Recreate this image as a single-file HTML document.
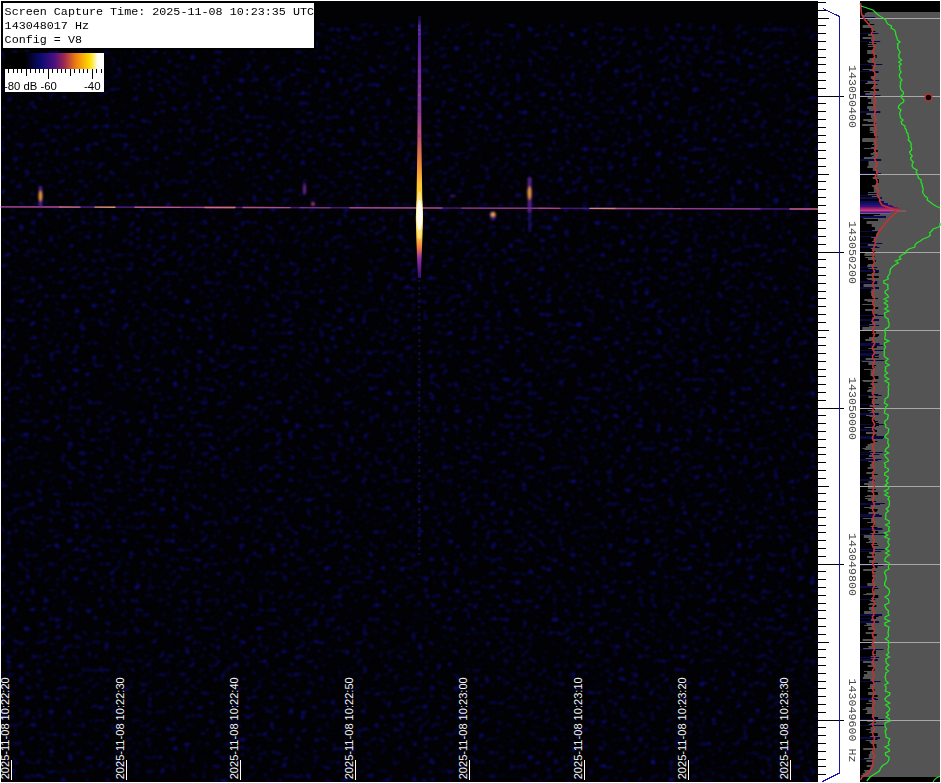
<!DOCTYPE html>
<html><head><meta charset="utf-8"><style>
html,body{margin:0;padding:0;background:#fff;width:941px;height:783px;overflow:hidden}
body{position:relative}
</style></head><body>
<svg width="941" height="783" viewBox="0 0 941 783" style="position:absolute;left:0;top:0" shape-rendering="auto">
<defs>
<filter id="nz" x="1" y="23" width="817" height="759" filterUnits="userSpaceOnUse" color-interpolation-filters="sRGB">
<feTurbulence type="fractalNoise" baseFrequency="0.163 0.217" numOctaves="2" seed="5" result="t"/>
<feColorMatrix in="t" type="matrix" values="0 0 0 0 0.06  0 0 0 0 0.06  0 0 0 0 0.7  1 0 0 0 0" result="c"/>
<feComponentTransfer in="c" result="d"><feFuncA type="linear" slope="3.0" intercept="-1.78"/></feComponentTransfer>
<feGaussianBlur in="d" stdDeviation="0.8"/>
</filter>
<linearGradient id="cb" x1="0" x2="1" y1="0" y2="0">
<stop offset="0" stop-color="#000"/><stop offset="0.2" stop-color="#000"/>
<stop offset="0.36" stop-color="#0a0a70"/><stop offset="0.5" stop-color="#4a1080"/>
<stop offset="0.6" stop-color="#a02850"/><stop offset="0.72" stop-color="#f08010"/>
<stop offset="0.86" stop-color="#ffe000"/><stop offset="0.94" stop-color="#ffffff"/><stop offset="1" stop-color="#fff"/>
</linearGradient>
<linearGradient id="stk" x1="0" x2="0" y1="16" y2="278" gradientUnits="userSpaceOnUse">
<stop offset="0" stop-color="#100830"/>
<stop offset="0.04" stop-color="#3a1a90"/>
<stop offset="0.17" stop-color="#6a2a9a"/>
<stop offset="0.36" stop-color="#8a3a90"/>
<stop offset="0.47" stop-color="#c05070"/>
<stop offset="0.57" stop-color="#f08a30"/>
<stop offset="0.645" stop-color="#ffc830"/>
<stop offset="0.84" stop-color="#ffd040"/>
<stop offset="0.885" stop-color="#f07a40"/>
<stop offset="0.924" stop-color="#9030a0"/>
<stop offset="1" stop-color="#301070"/>
</linearGradient>
<linearGradient id="hl" x1="0" x2="818" y1="0" y2="0" gradientUnits="userSpaceOnUse">
<stop offset="0" stop-color="#c04890"/>
<stop offset="0.07" stop-color="#e07080"/>
<stop offset="0.095" stop-color="#7030a0"/>
<stop offset="0.115" stop-color="#f0a060"/>
<stop offset="0.14" stop-color="#c04890"/>
<stop offset="0.54" stop-color="#b04090"/>
<stop offset="0.55" stop-color="#402090"/>
<stop offset="0.56" stop-color="#b04090"/>
<stop offset="0.73" stop-color="#e07070"/>
<stop offset="0.75" stop-color="#c04890"/>
<stop offset="0.91" stop-color="#b04090"/>
<stop offset="0.93" stop-color="#502090"/>
<stop offset="0.95" stop-color="#c05090"/>
<stop offset="1" stop-color="#c05090"/>
</linearGradient>
<filter id="b06" x="-50%" y="-50%" width="200%" height="200%"><feGaussianBlur stdDeviation="0.6"/></filter>
<filter id="b1" x="-50%" y="-50%" width="200%" height="200%"><feGaussianBlur stdDeviation="1"/></filter>
</defs>
<rect x="0" y="0" width="941" height="783" fill="#fff"/>
<rect x="1" y="1" width="817" height="781" fill="#020205"/>
<rect x="1" y="23" width="817" height="759" filter="url(#nz)" fill="#000"/>
<line x1="419.3" y1="274" x2="419.3" y2="560" stroke="#3a28b0" stroke-width="2" opacity="0.3" stroke-dasharray="3 3 2 5"/>
<g filter="url(#b06)">
<path d="M1 206.9 L818 209.0" stroke="#5a2090" stroke-width="1.6" fill="none" opacity="0.75"/>
<path d="M1 206.90 L60 207.05" stroke="#c85888" stroke-width="1.4" fill="none" opacity="0.72" stroke-linecap="round"/>
<path d="M60 207.05 L80 207.11" stroke="#e88878" stroke-width="1.4" fill="none" opacity="0.80" stroke-linecap="round"/>
<path d="M95 207.14 L115 207.20" stroke="#f8b060" stroke-width="1.4" fill="none" opacity="0.80" stroke-linecap="round"/>
<path d="M135 207.25 L180 207.36" stroke="#d87080" stroke-width="1.4" fill="none" opacity="0.76" stroke-linecap="round"/>
<path d="M180 207.36 L235 207.50" stroke="#c85888" stroke-width="1.4" fill="none" opacity="0.72" stroke-linecap="round"/>
<path d="M205 207.43 L235 207.50" stroke="#e08078" stroke-width="1.4" fill="none" opacity="0.72" stroke-linecap="round"/>
<path d="M243 207.52 L290 207.64" stroke="#d06888" stroke-width="1.4" fill="none" opacity="0.72" stroke-linecap="round"/>
<path d="M300 207.67 L330 207.75" stroke="#a04890" stroke-width="1.4" fill="none" opacity="0.56" stroke-linecap="round"/>
<path d="M350 207.80 L442 208.03" stroke="#c85888" stroke-width="1.4" fill="none" opacity="0.72" stroke-linecap="round"/>
<path d="M462 208.09 L540 208.29" stroke="#b04890" stroke-width="1.4" fill="none" opacity="0.64" stroke-linecap="round"/>
<path d="M540 208.29 L560 208.34" stroke="#c85888" stroke-width="1.4" fill="none" opacity="0.72" stroke-linecap="round"/>
<path d="M590 208.41 L615 208.48" stroke="#f8a070" stroke-width="1.4" fill="none" opacity="0.80" stroke-linecap="round"/>
<path d="M615 208.48 L680 208.65" stroke="#d06888" stroke-width="1.4" fill="none" opacity="0.72" stroke-linecap="round"/>
<path d="M680 208.65 L760 208.85" stroke="#b85090" stroke-width="1.4" fill="none" opacity="0.64" stroke-linecap="round"/>
<path d="M790 208.93 L818 209.00" stroke="#e07080" stroke-width="1.4" fill="none" opacity="0.80" stroke-linecap="round"/>
</g>
<g filter="url(#b1)">
<rect x="38.8" y="186" width="3.4" height="22" rx="1.7" fill="#6a2aa0" opacity="0.8"/>
<ellipse cx="40.5" cy="196" rx="1.8" ry="5" fill="#f0a040"/>
<rect x="527.8" y="177" width="3.6" height="36" rx="1.8" fill="#6a2aa0" opacity="0.85"/>
<ellipse cx="529.5" cy="193" rx="2" ry="6.5" fill="#f09a40"/>
<rect x="528.3" y="212" width="2.6" height="20" fill="#3020a0" opacity="0.5"/>
<ellipse cx="493" cy="216" rx="3" ry="5" fill="#4a20a0" opacity="0.7"/>
<ellipse cx="493" cy="214.5" rx="2.6" ry="2.2" fill="#f8a840"/>
<ellipse cx="304.5" cy="189" rx="1.6" ry="6" fill="#8030a0" opacity="0.8"/>
<ellipse cx="313" cy="204" rx="2" ry="2.2" fill="#a04080" opacity="0.9"/>
<ellipse cx="453" cy="196" rx="3" ry="1" fill="#7030a0" opacity="0.6"/>
</g>
<g filter="url(#b06)">
<path d="M418.1 16 L420.9 16 L421.4 140 L422.3 200 L423 218 L422.3 240 L421.4 262 L421 278 L418 278 L417.2 262 L416.4 240 L415.8 218 L416.5 200 L417.4 140 Z" fill="url(#stk)"/>
<rect x="418.0" y="70.1" width="2.2" height="1.5" fill="#c050a0" opacity="0.40"/>
<rect x="418.0" y="110.6" width="2.2" height="2" fill="#5030b0" opacity="0.57"/>
<rect x="418.6" y="85.4" width="2.2" height="2" fill="#c050a0" opacity="0.47"/>
<rect x="418.0" y="93.9" width="2.2" height="2" fill="#b04090" opacity="0.64"/>
<rect x="418.2" y="48.2" width="2.2" height="1.5" fill="#5030b0" opacity="0.44"/>
<rect x="418.2" y="131.9" width="2.2" height="1.5" fill="#b04090" opacity="0.43"/>
<rect x="418.2" y="28.9" width="2.2" height="2" fill="#c050a0" opacity="0.45"/>
<rect x="417.9" y="130.4" width="2.2" height="3" fill="#c050a0" opacity="0.54"/>
<rect x="418.1" y="135.3" width="2.2" height="1.5" fill="#5030b0" opacity="0.36"/>
<rect x="418.3" y="114.3" width="2.2" height="1.5" fill="#5030b0" opacity="0.56"/>
<rect x="417.8" y="28.2" width="2.2" height="2" fill="#5030b0" opacity="0.63"/>
<rect x="418.1" y="33.3" width="2.2" height="1.5" fill="#c050a0" opacity="0.42"/>
<rect x="418.1" y="24.6" width="2.2" height="3" fill="#b04090" opacity="0.38"/>
<rect x="417.8" y="113.7" width="2.2" height="1.5" fill="#b04090" opacity="0.40"/>
<rect x="418.4" y="70.1" width="2.2" height="2" fill="#5030b0" opacity="0.49"/>
<rect x="418.4" y="30.4" width="2.2" height="3" fill="#5030b0" opacity="0.61"/>
<ellipse cx="419.5" cy="215" rx="3.4" ry="24" fill="#ffe890" opacity="0.8"/>
<ellipse cx="419.5" cy="215" rx="3.0" ry="15" fill="#fffdf0"/>
</g>
<rect x="11" y="760" width="1" height="20" fill="#fff"/>
<text transform="translate(8.5,779.3) rotate(-90)" font-family="Liberation Sans, sans-serif" font-size="11.08" fill="#f4f4f4">2025-11-08 10:22:20</text>
<rect x="126" y="760" width="1" height="20" fill="#fff"/>
<text transform="translate(123.5,779.3) rotate(-90)" font-family="Liberation Sans, sans-serif" font-size="11.08" fill="#f4f4f4">2025-11-08 10:22:30</text>
<rect x="240" y="760" width="1" height="20" fill="#fff"/>
<text transform="translate(237.5,779.3) rotate(-90)" font-family="Liberation Sans, sans-serif" font-size="11.08" fill="#f4f4f4">2025-11-08 10:22:40</text>
<rect x="355" y="760" width="1" height="20" fill="#fff"/>
<text transform="translate(352.5,779.3) rotate(-90)" font-family="Liberation Sans, sans-serif" font-size="11.08" fill="#f4f4f4">2025-11-08 10:22:50</text>
<rect x="469" y="760" width="1" height="20" fill="#fff"/>
<text transform="translate(466.5,779.3) rotate(-90)" font-family="Liberation Sans, sans-serif" font-size="11.08" fill="#f4f4f4">2025-11-08 10:23:00</text>
<rect x="584" y="760" width="1" height="20" fill="#fff"/>
<text transform="translate(581.5,779.3) rotate(-90)" font-family="Liberation Sans, sans-serif" font-size="11.08" fill="#f4f4f4">2025-11-08 10:23:10</text>
<rect x="688" y="760" width="1" height="20" fill="#fff"/>
<text transform="translate(685.5,779.3) rotate(-90)" font-family="Liberation Sans, sans-serif" font-size="11.08" fill="#f4f4f4">2025-11-08 10:23:20</text>
<rect x="790" y="760" width="1" height="20" fill="#fff"/>
<text transform="translate(787.5,779.3) rotate(-90)" font-family="Liberation Sans, sans-serif" font-size="11.08" fill="#f4f4f4">2025-11-08 10:23:30</text>
<rect x="1" y="1" width="315" height="49" fill="#000"/>
<rect x="3" y="3" width="311" height="45" fill="#fff"/>
<text x="4.6" y="15.2" font-family="Liberation Mono, monospace" font-size="11.72" fill="#000">Screen&#160;Capture&#160;Time:&#160;2025-11-08&#160;10:23:35&#160;UTC</text>
<text x="4.6" y="29.2" font-family="Liberation Mono, monospace" font-size="11.72" fill="#000">143048017&#160;Hz</text>
<text x="4.6" y="43.2" font-family="Liberation Mono, monospace" font-size="11.72" fill="#000">Config&#160;=&#160;V8</text>
<rect x="5" y="53" width="99" height="16" fill="url(#cb)"/>
<rect x="5" y="69" width="99" height="23" fill="#fff"/>
<rect x="8" y="69" width="1" height="4" fill="#000"/>
<rect x="13" y="69" width="1" height="4" fill="#000"/>
<rect x="17" y="69" width="1" height="4" fill="#000"/>
<rect x="21" y="69" width="1" height="4" fill="#000"/>
<rect x="26" y="69" width="1" height="7" fill="#000"/>
<rect x="30" y="69" width="1" height="4" fill="#000"/>
<rect x="35" y="69" width="1" height="4" fill="#000"/>
<rect x="39" y="69" width="1" height="4" fill="#000"/>
<rect x="43" y="69" width="1" height="4" fill="#000"/>
<rect x="48" y="69" width="1" height="10" fill="#000"/>
<rect x="52" y="69" width="1" height="4" fill="#000"/>
<rect x="57" y="69" width="1" height="4" fill="#000"/>
<rect x="61" y="69" width="1" height="4" fill="#000"/>
<rect x="65" y="69" width="1" height="4" fill="#000"/>
<rect x="70" y="69" width="1" height="7" fill="#000"/>
<rect x="74" y="69" width="1" height="4" fill="#000"/>
<rect x="79" y="69" width="1" height="4" fill="#000"/>
<rect x="83" y="69" width="1" height="4" fill="#000"/>
<rect x="87" y="69" width="1" height="4" fill="#000"/>
<rect x="92" y="69" width="1" height="10" fill="#000"/>
<rect x="96" y="69" width="1" height="4" fill="#000"/>
<rect x="101" y="69" width="1" height="4" fill="#000"/>
<rect x="105" y="69" width="1" height="4" fill="#000"/>
<text x="4" y="90" font-family="Liberation Sans, sans-serif" font-size="11.3" fill="#000">-80 dB -60</text>
<text x="84" y="90" font-family="Liberation Sans, sans-serif" font-size="11.5" fill="#000">-40</text>
<rect x="818" y="1" width="42" height="781" fill="#fff"/>
<rect x="818" y="2" width="8" height="1" fill="#000"/>
<rect x="818" y="10" width="8" height="1" fill="#000"/>
<rect x="818" y="18" width="11" height="1" fill="#000"/>
<rect x="818" y="25" width="8" height="1" fill="#000"/>
<rect x="818" y="33" width="8" height="1" fill="#000"/>
<rect x="818" y="41" width="8" height="1" fill="#000"/>
<rect x="818" y="49" width="8" height="1" fill="#000"/>
<rect x="818" y="57" width="8" height="1" fill="#000"/>
<rect x="818" y="64" width="8" height="1" fill="#000"/>
<rect x="818" y="72" width="8" height="1" fill="#000"/>
<rect x="818" y="80" width="8" height="1" fill="#000"/>
<rect x="818" y="88" width="8" height="1" fill="#000"/>
<rect x="818" y="96" width="26" height="1" fill="#000"/>
<rect x="818" y="103" width="8" height="1" fill="#000"/>
<rect x="818" y="111" width="8" height="1" fill="#000"/>
<rect x="818" y="119" width="8" height="1" fill="#000"/>
<rect x="818" y="127" width="8" height="1" fill="#000"/>
<rect x="818" y="135" width="8" height="1" fill="#000"/>
<rect x="818" y="142" width="8" height="1" fill="#000"/>
<rect x="818" y="150" width="8" height="1" fill="#000"/>
<rect x="818" y="158" width="8" height="1" fill="#000"/>
<rect x="818" y="166" width="8" height="1" fill="#000"/>
<rect x="818" y="174" width="11" height="1" fill="#000"/>
<rect x="818" y="181" width="8" height="1" fill="#000"/>
<rect x="818" y="189" width="8" height="1" fill="#000"/>
<rect x="818" y="197" width="8" height="1" fill="#000"/>
<rect x="818" y="205" width="8" height="1" fill="#000"/>
<rect x="818" y="213" width="8" height="1" fill="#000"/>
<rect x="818" y="220" width="8" height="1" fill="#000"/>
<rect x="818" y="228" width="8" height="1" fill="#000"/>
<rect x="818" y="236" width="8" height="1" fill="#000"/>
<rect x="818" y="244" width="8" height="1" fill="#000"/>
<rect x="818" y="252" width="26" height="1" fill="#000"/>
<rect x="818" y="259" width="8" height="1" fill="#000"/>
<rect x="818" y="267" width="8" height="1" fill="#000"/>
<rect x="818" y="275" width="8" height="1" fill="#000"/>
<rect x="818" y="283" width="8" height="1" fill="#000"/>
<rect x="818" y="291" width="8" height="1" fill="#000"/>
<rect x="818" y="298" width="8" height="1" fill="#000"/>
<rect x="818" y="306" width="8" height="1" fill="#000"/>
<rect x="818" y="314" width="8" height="1" fill="#000"/>
<rect x="818" y="322" width="8" height="1" fill="#000"/>
<rect x="818" y="330" width="11" height="1" fill="#000"/>
<rect x="818" y="337" width="8" height="1" fill="#000"/>
<rect x="818" y="345" width="8" height="1" fill="#000"/>
<rect x="818" y="353" width="8" height="1" fill="#000"/>
<rect x="818" y="361" width="8" height="1" fill="#000"/>
<rect x="818" y="369" width="8" height="1" fill="#000"/>
<rect x="818" y="376" width="8" height="1" fill="#000"/>
<rect x="818" y="384" width="8" height="1" fill="#000"/>
<rect x="818" y="392" width="8" height="1" fill="#000"/>
<rect x="818" y="400" width="8" height="1" fill="#000"/>
<rect x="818" y="408" width="26" height="1" fill="#000"/>
<rect x="818" y="415" width="8" height="1" fill="#000"/>
<rect x="818" y="423" width="8" height="1" fill="#000"/>
<rect x="818" y="431" width="8" height="1" fill="#000"/>
<rect x="818" y="439" width="8" height="1" fill="#000"/>
<rect x="818" y="447" width="8" height="1" fill="#000"/>
<rect x="818" y="454" width="8" height="1" fill="#000"/>
<rect x="818" y="462" width="8" height="1" fill="#000"/>
<rect x="818" y="470" width="8" height="1" fill="#000"/>
<rect x="818" y="478" width="8" height="1" fill="#000"/>
<rect x="818" y="486" width="11" height="1" fill="#000"/>
<rect x="818" y="493" width="8" height="1" fill="#000"/>
<rect x="818" y="501" width="8" height="1" fill="#000"/>
<rect x="818" y="509" width="8" height="1" fill="#000"/>
<rect x="818" y="517" width="8" height="1" fill="#000"/>
<rect x="818" y="525" width="8" height="1" fill="#000"/>
<rect x="818" y="532" width="8" height="1" fill="#000"/>
<rect x="818" y="540" width="8" height="1" fill="#000"/>
<rect x="818" y="548" width="8" height="1" fill="#000"/>
<rect x="818" y="556" width="8" height="1" fill="#000"/>
<rect x="818" y="564" width="26" height="1" fill="#000"/>
<rect x="818" y="571" width="8" height="1" fill="#000"/>
<rect x="818" y="579" width="8" height="1" fill="#000"/>
<rect x="818" y="587" width="8" height="1" fill="#000"/>
<rect x="818" y="595" width="8" height="1" fill="#000"/>
<rect x="818" y="603" width="8" height="1" fill="#000"/>
<rect x="818" y="610" width="8" height="1" fill="#000"/>
<rect x="818" y="618" width="8" height="1" fill="#000"/>
<rect x="818" y="626" width="8" height="1" fill="#000"/>
<rect x="818" y="634" width="8" height="1" fill="#000"/>
<rect x="818" y="642" width="11" height="1" fill="#000"/>
<rect x="818" y="649" width="8" height="1" fill="#000"/>
<rect x="818" y="657" width="8" height="1" fill="#000"/>
<rect x="818" y="665" width="8" height="1" fill="#000"/>
<rect x="818" y="673" width="8" height="1" fill="#000"/>
<rect x="818" y="681" width="8" height="1" fill="#000"/>
<rect x="818" y="688" width="8" height="1" fill="#000"/>
<rect x="818" y="696" width="8" height="1" fill="#000"/>
<rect x="818" y="704" width="8" height="1" fill="#000"/>
<rect x="818" y="712" width="8" height="1" fill="#000"/>
<rect x="818" y="720" width="26" height="1" fill="#000"/>
<rect x="818" y="727" width="8" height="1" fill="#000"/>
<rect x="818" y="735" width="8" height="1" fill="#000"/>
<rect x="818" y="743" width="8" height="1" fill="#000"/>
<rect x="818" y="751" width="8" height="1" fill="#000"/>
<rect x="818" y="759" width="8" height="1" fill="#000"/>
<rect x="818" y="766" width="8" height="1" fill="#000"/>
<rect x="818" y="774" width="8" height="1" fill="#000"/>
<polyline points="823,8.5 839.5,16.5 839.5,773 822.5,781.5" fill="none" stroke="#1818a8" stroke-width="1" shape-rendering="crispEdges"/>
<text transform="translate(848.6,96.5) rotate(90)" text-anchor="middle" font-family="Liberation Mono, monospace" font-size="11.67" fill="#484848">143050400</text>
<text transform="translate(848.6,252.5) rotate(90)" text-anchor="middle" font-family="Liberation Mono, monospace" font-size="11.67" fill="#484848">143050200</text>
<text transform="translate(848.6,408.5) rotate(90)" text-anchor="middle" font-family="Liberation Mono, monospace" font-size="11.67" fill="#484848">143050000</text>
<text transform="translate(848.6,564.5) rotate(90)" text-anchor="middle" font-family="Liberation Mono, monospace" font-size="11.67" fill="#484848">143049800</text>
<text transform="translate(848.6,720.5) rotate(90)" text-anchor="middle" font-family="Liberation Mono, monospace" font-size="11.67" fill="#484848">143049600&#160;Hz</text>
<rect x="860" y="1" width="80" height="781" fill="#545454"/>
<rect x="860" y="12" width="6.7" height="1" fill="#000"/>
<rect x="860" y="13" width="4.8" height="2" fill="#000"/>
<rect x="860" y="15" width="1.7" height="1" fill="#000"/>
<rect x="860" y="16" width="3.1" height="2" fill="#000"/>
<rect x="860" y="18" width="4.6" height="1" fill="#000"/>
<rect x="860" y="19" width="7.3" height="2" fill="#000"/>
<rect x="860" y="21" width="9.3" height="3" fill="#000"/>
<rect x="860" y="24" width="14.2" height="1" fill="#000"/>
<rect x="860" y="25" width="2.7" height="3" fill="#000"/>
<rect x="860" y="28" width="11.7" height="3" fill="#000"/>
<rect x="860" y="31" width="15.4" height="1" fill="#000"/>
<rect x="860" y="32" width="12.7" height="1" fill="#000"/>
<rect x="860" y="33" width="11.1" height="1" fill="#000"/>
<rect x="860" y="34" width="8.1" height="2" fill="#000"/>
<rect x="860" y="36" width="11.7" height="1" fill="#000"/>
<rect x="860" y="37" width="2.6" height="2" fill="#000"/>
<rect x="860" y="39" width="11.0" height="1" fill="#000"/>
<rect x="860" y="40" width="11.1" height="2" fill="#000"/>
<rect x="860" y="42" width="9.0" height="1" fill="#000"/>
<rect x="860" y="43" width="16.3" height="1" fill="#000"/>
<rect x="860" y="44" width="7.7" height="1" fill="#000"/>
<rect x="860" y="45" width="12.8" height="1" fill="#000"/>
<rect x="860" y="46" width="8.0" height="1" fill="#000"/>
<rect x="860" y="47" width="13.6" height="3" fill="#000"/>
<rect x="860" y="50" width="7.2" height="1" fill="#000"/>
<rect x="860" y="51" width="7.2" height="3" fill="#000"/>
<rect x="860" y="54" width="13.8" height="1" fill="#000"/>
<rect x="860" y="55" width="16.7" height="3" fill="#000"/>
<rect x="860" y="58" width="9.4" height="2" fill="#000"/>
<rect x="860" y="60" width="7.3" height="2" fill="#000"/>
<rect x="860" y="62" width="8.4" height="1" fill="#000"/>
<rect x="860" y="63" width="15.1" height="2" fill="#000"/>
<rect x="860" y="65" width="11.5" height="1" fill="#000"/>
<rect x="860" y="66" width="12.7" height="3" fill="#000"/>
<rect x="860" y="69" width="2.8" height="1" fill="#000"/>
<rect x="860" y="70" width="9.4" height="1" fill="#000"/>
<rect x="860" y="71" width="18.5" height="2" fill="#000"/>
<rect x="860" y="73" width="14.3" height="3" fill="#000"/>
<rect x="860" y="76" width="10.8" height="3" fill="#000"/>
<rect x="860" y="79" width="12.4" height="2" fill="#000"/>
<rect x="860" y="81" width="7.4" height="2" fill="#000"/>
<rect x="860" y="83" width="5.2" height="1" fill="#000"/>
<rect x="860" y="84" width="17.6" height="1" fill="#000"/>
<rect x="860" y="85" width="13.7" height="2" fill="#000"/>
<rect x="860" y="87" width="11.8" height="1" fill="#000"/>
<rect x="860" y="88" width="10.9" height="1" fill="#000"/>
<rect x="860" y="89" width="18.9" height="2" fill="#000"/>
<rect x="860" y="91" width="3.9" height="1" fill="#000"/>
<rect x="860" y="92" width="9.8" height="1" fill="#000"/>
<rect x="860" y="93" width="5.3" height="3" fill="#000"/>
<rect x="860" y="96" width="7.6" height="3" fill="#000"/>
<rect x="860" y="99" width="11.2" height="3" fill="#000"/>
<rect x="860" y="102" width="8.2" height="2" fill="#000"/>
<rect x="860" y="104" width="13.3" height="2" fill="#000"/>
<rect x="860" y="106" width="7.4" height="1" fill="#000"/>
<rect x="860" y="107" width="7.1" height="2" fill="#000"/>
<rect x="860" y="109" width="9.0" height="2" fill="#000"/>
<rect x="860" y="111" width="12.6" height="1" fill="#000"/>
<rect x="860" y="112" width="15.7" height="1" fill="#000"/>
<rect x="860" y="113" width="6.4" height="2" fill="#000"/>
<rect x="860" y="115" width="10.9" height="3" fill="#000"/>
<rect x="860" y="118" width="11.8" height="1" fill="#000"/>
<rect x="860" y="119" width="3.3" height="2" fill="#000"/>
<rect x="860" y="121" width="7.8" height="1" fill="#000"/>
<rect x="860" y="122" width="15.4" height="2" fill="#000"/>
<rect x="860" y="124" width="2.2" height="2" fill="#000"/>
<rect x="860" y="126" width="13.9" height="1" fill="#000"/>
<rect x="860" y="127" width="9.8" height="3" fill="#000"/>
<rect x="860" y="130" width="9.5" height="1" fill="#000"/>
<rect x="860" y="131" width="12.5" height="1" fill="#000"/>
<rect x="860" y="132" width="9.8" height="1" fill="#000"/>
<rect x="860" y="133" width="13.9" height="3" fill="#000"/>
<rect x="860" y="136" width="17.3" height="2" fill="#000"/>
<rect x="860" y="138" width="2.6" height="1" fill="#000"/>
<rect x="860" y="139" width="2.1" height="3" fill="#000"/>
<rect x="860" y="142" width="13.5" height="2" fill="#000"/>
<rect x="860" y="144" width="12.0" height="1" fill="#000"/>
<rect x="860" y="145" width="14.2" height="2" fill="#000"/>
<rect x="860" y="147" width="11.1" height="1" fill="#000"/>
<rect x="860" y="148" width="3.8" height="1" fill="#000"/>
<rect x="860" y="149" width="15.0" height="1" fill="#000"/>
<rect x="860" y="150" width="17.8" height="2" fill="#000"/>
<rect x="860" y="152" width="13.0" height="1" fill="#000"/>
<rect x="860" y="153" width="10.7" height="2" fill="#000"/>
<rect x="860" y="155" width="13.5" height="1" fill="#000"/>
<rect x="860" y="156" width="11.6" height="1" fill="#000"/>
<rect x="860" y="157" width="3.9" height="3" fill="#000"/>
<rect x="860" y="160" width="14.2" height="1" fill="#000"/>
<rect x="860" y="161" width="8.5" height="2" fill="#000"/>
<rect x="860" y="163" width="8.5" height="3" fill="#000"/>
<rect x="860" y="166" width="7.3" height="2" fill="#000"/>
<rect x="860" y="168" width="12.8" height="3" fill="#000"/>
<rect x="860" y="171" width="15.8" height="2" fill="#000"/>
<rect x="860" y="173" width="3.5" height="1" fill="#000"/>
<rect x="860" y="174" width="9.6" height="1" fill="#000"/>
<rect x="860" y="175" width="16.7" height="2" fill="#000"/>
<rect x="860" y="177" width="12.7" height="2" fill="#000"/>
<rect x="860" y="179" width="18.9" height="1" fill="#000"/>
<rect x="860" y="180" width="18.9" height="3" fill="#000"/>
<rect x="860" y="183" width="16.0" height="2" fill="#000"/>
<rect x="860" y="185" width="12.2" height="2" fill="#000"/>
<rect x="860" y="187" width="13.8" height="2" fill="#000"/>
<rect x="860" y="189" width="13.9" height="3" fill="#000"/>
<rect x="860" y="192" width="8.0" height="1" fill="#000"/>
<rect x="860" y="193" width="18.1" height="1" fill="#000"/>
<rect x="860" y="194" width="7.8" height="2" fill="#000"/>
<rect x="860" y="196" width="11.8" height="1" fill="#000"/>
<rect x="860" y="197" width="14.6" height="3" fill="#000"/>
<rect x="860" y="200" width="17.0" height="1" fill="#000"/>
<rect x="860" y="201" width="13.0" height="2" fill="#000"/>
<rect x="860" y="203" width="9.0" height="1" fill="#000"/>
<rect x="860" y="204" width="18.7" height="2" fill="#000"/>
<rect x="860" y="206" width="13.7" height="2" fill="#000"/>
<rect x="860" y="208" width="11.7" height="1" fill="#000"/>
<rect x="860" y="209" width="5.4" height="2" fill="#000"/>
<rect x="860" y="211" width="7.8" height="1" fill="#000"/>
<rect x="860" y="212" width="14.6" height="1" fill="#000"/>
<rect x="860" y="213" width="2.4" height="2" fill="#000"/>
<rect x="860" y="215" width="13.7" height="1" fill="#000"/>
<rect x="860" y="216" width="3.3" height="3" fill="#000"/>
<rect x="860" y="219" width="13.9" height="2" fill="#000"/>
<rect x="860" y="221" width="6.6" height="3" fill="#000"/>
<rect x="860" y="224" width="11.7" height="3" fill="#000"/>
<rect x="860" y="227" width="14.9" height="3" fill="#000"/>
<rect x="860" y="230" width="12.2" height="1" fill="#000"/>
<rect x="860" y="231" width="13.5" height="1" fill="#000"/>
<rect x="860" y="232" width="17.8" height="2" fill="#000"/>
<rect x="860" y="234" width="16.1" height="2" fill="#000"/>
<rect x="860" y="236" width="8.0" height="1" fill="#000"/>
<rect x="860" y="237" width="11.1" height="1" fill="#000"/>
<rect x="860" y="238" width="13.8" height="2" fill="#000"/>
<rect x="860" y="240" width="14.4" height="1" fill="#000"/>
<rect x="860" y="241" width="12.0" height="1" fill="#000"/>
<rect x="860" y="242" width="15.0" height="1" fill="#000"/>
<rect x="860" y="243" width="2.7" height="1" fill="#000"/>
<rect x="860" y="244" width="7.8" height="2" fill="#000"/>
<rect x="860" y="246" width="15.0" height="2" fill="#000"/>
<rect x="860" y="248" width="10.8" height="1" fill="#000"/>
<rect x="860" y="249" width="13.2" height="2" fill="#000"/>
<rect x="860" y="251" width="15.3" height="1" fill="#000"/>
<rect x="860" y="252" width="4.9" height="2" fill="#000"/>
<rect x="860" y="254" width="4.2" height="1" fill="#000"/>
<rect x="860" y="255" width="4.5" height="1" fill="#000"/>
<rect x="860" y="256" width="14.5" height="1" fill="#000"/>
<rect x="860" y="257" width="5.2" height="1" fill="#000"/>
<rect x="860" y="258" width="8.1" height="2" fill="#000"/>
<rect x="860" y="260" width="15.7" height="2" fill="#000"/>
<rect x="860" y="262" width="13.9" height="2" fill="#000"/>
<rect x="860" y="264" width="8.1" height="1" fill="#000"/>
<rect x="860" y="265" width="7.2" height="2" fill="#000"/>
<rect x="860" y="267" width="7.4" height="1" fill="#000"/>
<rect x="860" y="268" width="8.4" height="1" fill="#000"/>
<rect x="860" y="269" width="15.7" height="3" fill="#000"/>
<rect x="860" y="272" width="18.6" height="1" fill="#000"/>
<rect x="860" y="273" width="11.7" height="1" fill="#000"/>
<rect x="860" y="274" width="7.1" height="2" fill="#000"/>
<rect x="860" y="276" width="18.7" height="2" fill="#000"/>
<rect x="860" y="278" width="6.6" height="1" fill="#000"/>
<rect x="860" y="279" width="7.7" height="1" fill="#000"/>
<rect x="860" y="280" width="11.6" height="3" fill="#000"/>
<rect x="860" y="283" width="17.2" height="1" fill="#000"/>
<rect x="860" y="284" width="3.5" height="3" fill="#000"/>
<rect x="860" y="287" width="10.8" height="2" fill="#000"/>
<rect x="860" y="289" width="11.3" height="2" fill="#000"/>
<rect x="860" y="291" width="10.6" height="2" fill="#000"/>
<rect x="860" y="293" width="11.2" height="3" fill="#000"/>
<rect x="860" y="296" width="12.1" height="2" fill="#000"/>
<rect x="860" y="298" width="17.9" height="1" fill="#000"/>
<rect x="860" y="299" width="4.4" height="2" fill="#000"/>
<rect x="860" y="301" width="7.4" height="1" fill="#000"/>
<rect x="860" y="302" width="12.9" height="2" fill="#000"/>
<rect x="860" y="304" width="2.1" height="1" fill="#000"/>
<rect x="860" y="305" width="13.9" height="2" fill="#000"/>
<rect x="860" y="307" width="18.2" height="2" fill="#000"/>
<rect x="860" y="309" width="5.1" height="2" fill="#000"/>
<rect x="860" y="311" width="13.6" height="3" fill="#000"/>
<rect x="860" y="314" width="17.4" height="1" fill="#000"/>
<rect x="860" y="315" width="14.7" height="2" fill="#000"/>
<rect x="860" y="317" width="12.4" height="3" fill="#000"/>
<rect x="860" y="320" width="10.8" height="2" fill="#000"/>
<rect x="860" y="322" width="12.2" height="2" fill="#000"/>
<rect x="860" y="324" width="9.2" height="3" fill="#000"/>
<rect x="860" y="327" width="2.3" height="3" fill="#000"/>
<rect x="860" y="330" width="6.3" height="1" fill="#000"/>
<rect x="860" y="331" width="15.8" height="1" fill="#000"/>
<rect x="860" y="332" width="15.8" height="1" fill="#000"/>
<rect x="860" y="333" width="12.2" height="1" fill="#000"/>
<rect x="860" y="334" width="19.0" height="2" fill="#000"/>
<rect x="860" y="336" width="17.8" height="1" fill="#000"/>
<rect x="860" y="337" width="9.0" height="2" fill="#000"/>
<rect x="860" y="339" width="5.3" height="2" fill="#000"/>
<rect x="860" y="341" width="12.9" height="1" fill="#000"/>
<rect x="860" y="342" width="11.5" height="2" fill="#000"/>
<rect x="860" y="344" width="2.1" height="1" fill="#000"/>
<rect x="860" y="345" width="18.2" height="1" fill="#000"/>
<rect x="860" y="346" width="16.7" height="2" fill="#000"/>
<rect x="860" y="348" width="8.3" height="1" fill="#000"/>
<rect x="860" y="349" width="12.6" height="1" fill="#000"/>
<rect x="860" y="350" width="6.9" height="1" fill="#000"/>
<rect x="860" y="351" width="14.0" height="2" fill="#000"/>
<rect x="860" y="353" width="10.7" height="1" fill="#000"/>
<rect x="860" y="354" width="19.0" height="1" fill="#000"/>
<rect x="860" y="355" width="14.6" height="2" fill="#000"/>
<rect x="860" y="357" width="18.9" height="1" fill="#000"/>
<rect x="860" y="358" width="5.7" height="2" fill="#000"/>
<rect x="860" y="360" width="6.2" height="1" fill="#000"/>
<rect x="860" y="361" width="2.0" height="1" fill="#000"/>
<rect x="860" y="362" width="8.4" height="3" fill="#000"/>
<rect x="860" y="365" width="16.1" height="1" fill="#000"/>
<rect x="860" y="366" width="14.2" height="1" fill="#000"/>
<rect x="860" y="367" width="14.4" height="2" fill="#000"/>
<rect x="860" y="369" width="3.9" height="1" fill="#000"/>
<rect x="860" y="370" width="10.6" height="3" fill="#000"/>
<rect x="860" y="373" width="10.4" height="3" fill="#000"/>
<rect x="860" y="376" width="18.4" height="3" fill="#000"/>
<rect x="860" y="379" width="12.4" height="1" fill="#000"/>
<rect x="860" y="380" width="2.3" height="1" fill="#000"/>
<rect x="860" y="381" width="3.2" height="1" fill="#000"/>
<rect x="860" y="382" width="17.5" height="1" fill="#000"/>
<rect x="860" y="383" width="10.5" height="2" fill="#000"/>
<rect x="860" y="385" width="12.6" height="2" fill="#000"/>
<rect x="860" y="387" width="8.2" height="1" fill="#000"/>
<rect x="860" y="388" width="11.4" height="1" fill="#000"/>
<rect x="860" y="389" width="8.7" height="1" fill="#000"/>
<rect x="860" y="390" width="7.2" height="2" fill="#000"/>
<rect x="860" y="392" width="11.7" height="2" fill="#000"/>
<rect x="860" y="394" width="18.1" height="2" fill="#000"/>
<rect x="860" y="396" width="8.4" height="2" fill="#000"/>
<rect x="860" y="398" width="17.5" height="1" fill="#000"/>
<rect x="860" y="399" width="11.6" height="1" fill="#000"/>
<rect x="860" y="400" width="12.5" height="3" fill="#000"/>
<rect x="860" y="403" width="11.6" height="1" fill="#000"/>
<rect x="860" y="404" width="6.3" height="1" fill="#000"/>
<rect x="860" y="405" width="9.6" height="2" fill="#000"/>
<rect x="860" y="407" width="15.1" height="2" fill="#000"/>
<rect x="860" y="409" width="14.8" height="1" fill="#000"/>
<rect x="860" y="410" width="7.8" height="1" fill="#000"/>
<rect x="860" y="411" width="11.7" height="1" fill="#000"/>
<rect x="860" y="412" width="9.7" height="2" fill="#000"/>
<rect x="860" y="414" width="13.1" height="1" fill="#000"/>
<rect x="860" y="415" width="6.0" height="1" fill="#000"/>
<rect x="860" y="416" width="9.7" height="1" fill="#000"/>
<rect x="860" y="417" width="13.5" height="3" fill="#000"/>
<rect x="860" y="420" width="15.0" height="1" fill="#000"/>
<rect x="860" y="421" width="17.9" height="1" fill="#000"/>
<rect x="860" y="422" width="15.9" height="1" fill="#000"/>
<rect x="860" y="423" width="18.9" height="3" fill="#000"/>
<rect x="860" y="426" width="16.0" height="1" fill="#000"/>
<rect x="860" y="427" width="4.7" height="1" fill="#000"/>
<rect x="860" y="428" width="13.4" height="1" fill="#000"/>
<rect x="860" y="429" width="13.4" height="1" fill="#000"/>
<rect x="860" y="430" width="17.0" height="2" fill="#000"/>
<rect x="860" y="432" width="6.0" height="2" fill="#000"/>
<rect x="860" y="434" width="16.3" height="2" fill="#000"/>
<rect x="860" y="436" width="7.7" height="2" fill="#000"/>
<rect x="860" y="438" width="13.6" height="1" fill="#000"/>
<rect x="860" y="439" width="12.3" height="2" fill="#000"/>
<rect x="860" y="441" width="17.4" height="1" fill="#000"/>
<rect x="860" y="442" width="15.0" height="1" fill="#000"/>
<rect x="860" y="443" width="10.2" height="1" fill="#000"/>
<rect x="860" y="444" width="7.6" height="2" fill="#000"/>
<rect x="860" y="446" width="5.8" height="2" fill="#000"/>
<rect x="860" y="448" width="2.4" height="1" fill="#000"/>
<rect x="860" y="449" width="4.6" height="1" fill="#000"/>
<rect x="860" y="450" width="11.2" height="1" fill="#000"/>
<rect x="860" y="451" width="9.3" height="1" fill="#000"/>
<rect x="860" y="452" width="10.2" height="2" fill="#000"/>
<rect x="860" y="454" width="8.9" height="3" fill="#000"/>
<rect x="860" y="457" width="13.4" height="1" fill="#000"/>
<rect x="860" y="458" width="5.6" height="1" fill="#000"/>
<rect x="860" y="459" width="8.9" height="2" fill="#000"/>
<rect x="860" y="461" width="8.3" height="1" fill="#000"/>
<rect x="860" y="462" width="11.4" height="2" fill="#000"/>
<rect x="860" y="464" width="9.9" height="2" fill="#000"/>
<rect x="860" y="466" width="10.3" height="1" fill="#000"/>
<rect x="860" y="467" width="7.6" height="2" fill="#000"/>
<rect x="860" y="469" width="14.0" height="3" fill="#000"/>
<rect x="860" y="472" width="6.4" height="2" fill="#000"/>
<rect x="860" y="474" width="17.6" height="1" fill="#000"/>
<rect x="860" y="475" width="11.7" height="2" fill="#000"/>
<rect x="860" y="477" width="9.7" height="3" fill="#000"/>
<rect x="860" y="480" width="8.5" height="3" fill="#000"/>
<rect x="860" y="483" width="4.1" height="2" fill="#000"/>
<rect x="860" y="485" width="7.9" height="1" fill="#000"/>
<rect x="860" y="486" width="8.0" height="3" fill="#000"/>
<rect x="860" y="489" width="15.9" height="1" fill="#000"/>
<rect x="860" y="490" width="7.5" height="2" fill="#000"/>
<rect x="860" y="492" width="17.8" height="3" fill="#000"/>
<rect x="860" y="495" width="7.2" height="1" fill="#000"/>
<rect x="860" y="496" width="4.8" height="1" fill="#000"/>
<rect x="860" y="497" width="11.1" height="1" fill="#000"/>
<rect x="860" y="498" width="4.9" height="1" fill="#000"/>
<rect x="860" y="499" width="7.8" height="2" fill="#000"/>
<rect x="860" y="501" width="16.1" height="1" fill="#000"/>
<rect x="860" y="502" width="13.1" height="2" fill="#000"/>
<rect x="860" y="504" width="10.5" height="3" fill="#000"/>
<rect x="860" y="507" width="4.1" height="1" fill="#000"/>
<rect x="860" y="508" width="9.5" height="1" fill="#000"/>
<rect x="860" y="509" width="17.6" height="1" fill="#000"/>
<rect x="860" y="510" width="17.5" height="1" fill="#000"/>
<rect x="860" y="511" width="16.6" height="1" fill="#000"/>
<rect x="860" y="512" width="8.5" height="2" fill="#000"/>
<rect x="860" y="514" width="10.3" height="2" fill="#000"/>
<rect x="860" y="516" width="14.0" height="2" fill="#000"/>
<rect x="860" y="518" width="3.1" height="1" fill="#000"/>
<rect x="860" y="519" width="11.1" height="3" fill="#000"/>
<rect x="860" y="522" width="7.1" height="1" fill="#000"/>
<rect x="860" y="523" width="15.1" height="3" fill="#000"/>
<rect x="860" y="526" width="10.6" height="1" fill="#000"/>
<rect x="860" y="527" width="17.4" height="2" fill="#000"/>
<rect x="860" y="529" width="11.6" height="2" fill="#000"/>
<rect x="860" y="531" width="18.2" height="2" fill="#000"/>
<rect x="860" y="533" width="10.1" height="1" fill="#000"/>
<rect x="860" y="534" width="11.1" height="1" fill="#000"/>
<rect x="860" y="535" width="3.8" height="3" fill="#000"/>
<rect x="860" y="538" width="8.5" height="2" fill="#000"/>
<rect x="860" y="540" width="10.1" height="1" fill="#000"/>
<rect x="860" y="541" width="8.9" height="1" fill="#000"/>
<rect x="860" y="542" width="6.1" height="1" fill="#000"/>
<rect x="860" y="543" width="17.2" height="1" fill="#000"/>
<rect x="860" y="544" width="11.3" height="1" fill="#000"/>
<rect x="860" y="545" width="18.2" height="1" fill="#000"/>
<rect x="860" y="546" width="12.3" height="1" fill="#000"/>
<rect x="860" y="547" width="13.3" height="2" fill="#000"/>
<rect x="860" y="549" width="7.0" height="1" fill="#000"/>
<rect x="860" y="550" width="12.8" height="2" fill="#000"/>
<rect x="860" y="552" width="9.2" height="2" fill="#000"/>
<rect x="860" y="554" width="14.7" height="2" fill="#000"/>
<rect x="860" y="556" width="7.0" height="1" fill="#000"/>
<rect x="860" y="557" width="7.3" height="1" fill="#000"/>
<rect x="860" y="558" width="13.9" height="2" fill="#000"/>
<rect x="860" y="560" width="9.0" height="3" fill="#000"/>
<rect x="860" y="563" width="17.9" height="1" fill="#000"/>
<rect x="860" y="564" width="6.7" height="1" fill="#000"/>
<rect x="860" y="565" width="11.6" height="1" fill="#000"/>
<rect x="860" y="566" width="17.4" height="2" fill="#000"/>
<rect x="860" y="568" width="11.9" height="1" fill="#000"/>
<rect x="860" y="569" width="3.2" height="2" fill="#000"/>
<rect x="860" y="571" width="15.7" height="1" fill="#000"/>
<rect x="860" y="572" width="13.0" height="1" fill="#000"/>
<rect x="860" y="573" width="13.2" height="1" fill="#000"/>
<rect x="860" y="574" width="14.7" height="1" fill="#000"/>
<rect x="860" y="575" width="12.0" height="2" fill="#000"/>
<rect x="860" y="577" width="14.7" height="2" fill="#000"/>
<rect x="860" y="579" width="12.6" height="2" fill="#000"/>
<rect x="860" y="581" width="13.1" height="1" fill="#000"/>
<rect x="860" y="582" width="13.3" height="1" fill="#000"/>
<rect x="860" y="583" width="7.3" height="3" fill="#000"/>
<rect x="860" y="586" width="9.4" height="1" fill="#000"/>
<rect x="860" y="587" width="3.4" height="1" fill="#000"/>
<rect x="860" y="588" width="18.3" height="1" fill="#000"/>
<rect x="860" y="589" width="14.2" height="2" fill="#000"/>
<rect x="860" y="591" width="12.5" height="2" fill="#000"/>
<rect x="860" y="593" width="6.4" height="1" fill="#000"/>
<rect x="860" y="594" width="3.4" height="1" fill="#000"/>
<rect x="860" y="595" width="18.3" height="3" fill="#000"/>
<rect x="860" y="598" width="11.0" height="1" fill="#000"/>
<rect x="860" y="599" width="9.7" height="2" fill="#000"/>
<rect x="860" y="601" width="10.9" height="1" fill="#000"/>
<rect x="860" y="602" width="15.3" height="1" fill="#000"/>
<rect x="860" y="603" width="9.6" height="1" fill="#000"/>
<rect x="860" y="604" width="8.1" height="1" fill="#000"/>
<rect x="860" y="605" width="16.3" height="2" fill="#000"/>
<rect x="860" y="607" width="8.9" height="3" fill="#000"/>
<rect x="860" y="610" width="10.9" height="1" fill="#000"/>
<rect x="860" y="611" width="4.1" height="3" fill="#000"/>
<rect x="860" y="614" width="16.4" height="1" fill="#000"/>
<rect x="860" y="615" width="5.0" height="1" fill="#000"/>
<rect x="860" y="616" width="18.5" height="1" fill="#000"/>
<rect x="860" y="617" width="16.1" height="2" fill="#000"/>
<rect x="860" y="619" width="10.7" height="3" fill="#000"/>
<rect x="860" y="622" width="16.7" height="1" fill="#000"/>
<rect x="860" y="623" width="6.1" height="1" fill="#000"/>
<rect x="860" y="624" width="6.8" height="1" fill="#000"/>
<rect x="860" y="625" width="4.3" height="1" fill="#000"/>
<rect x="860" y="626" width="11.6" height="1" fill="#000"/>
<rect x="860" y="627" width="8.2" height="3" fill="#000"/>
<rect x="860" y="630" width="14.5" height="1" fill="#000"/>
<rect x="860" y="631" width="14.1" height="1" fill="#000"/>
<rect x="860" y="632" width="5.7" height="2" fill="#000"/>
<rect x="860" y="634" width="16.9" height="1" fill="#000"/>
<rect x="860" y="635" width="16.5" height="1" fill="#000"/>
<rect x="860" y="636" width="13.8" height="3" fill="#000"/>
<rect x="860" y="639" width="2.6" height="2" fill="#000"/>
<rect x="860" y="641" width="12.4" height="3" fill="#000"/>
<rect x="860" y="644" width="10.8" height="1" fill="#000"/>
<rect x="860" y="645" width="11.8" height="1" fill="#000"/>
<rect x="860" y="646" width="8.1" height="1" fill="#000"/>
<rect x="860" y="647" width="8.8" height="1" fill="#000"/>
<rect x="860" y="648" width="3.2" height="2" fill="#000"/>
<rect x="860" y="650" width="15.7" height="1" fill="#000"/>
<rect x="860" y="651" width="15.9" height="3" fill="#000"/>
<rect x="860" y="654" width="12.3" height="1" fill="#000"/>
<rect x="860" y="655" width="15.8" height="1" fill="#000"/>
<rect x="860" y="656" width="10.6" height="3" fill="#000"/>
<rect x="860" y="659" width="15.7" height="2" fill="#000"/>
<rect x="860" y="661" width="3.1" height="2" fill="#000"/>
<rect x="860" y="663" width="11.1" height="1" fill="#000"/>
<rect x="860" y="664" width="11.5" height="1" fill="#000"/>
<rect x="860" y="665" width="7.8" height="2" fill="#000"/>
<rect x="860" y="667" width="14.7" height="3" fill="#000"/>
<rect x="860" y="670" width="14.4" height="1" fill="#000"/>
<rect x="860" y="671" width="3.9" height="1" fill="#000"/>
<rect x="860" y="672" width="7.1" height="2" fill="#000"/>
<rect x="860" y="674" width="3.9" height="3" fill="#000"/>
<rect x="860" y="677" width="2.9" height="2" fill="#000"/>
<rect x="860" y="679" width="10.3" height="3" fill="#000"/>
<rect x="860" y="682" width="14.4" height="2" fill="#000"/>
<rect x="860" y="684" width="10.1" height="2" fill="#000"/>
<rect x="860" y="686" width="9.8" height="2" fill="#000"/>
<rect x="860" y="688" width="7.6" height="1" fill="#000"/>
<rect x="860" y="689" width="14.5" height="3" fill="#000"/>
<rect x="860" y="692" width="8.2" height="3" fill="#000"/>
<rect x="860" y="695" width="17.6" height="2" fill="#000"/>
<rect x="860" y="697" width="13.8" height="2" fill="#000"/>
<rect x="860" y="699" width="18.1" height="1" fill="#000"/>
<rect x="860" y="700" width="8.7" height="2" fill="#000"/>
<rect x="860" y="702" width="12.1" height="1" fill="#000"/>
<rect x="860" y="703" width="6.2" height="1" fill="#000"/>
<rect x="860" y="704" width="11.8" height="1" fill="#000"/>
<rect x="860" y="705" width="12.4" height="2" fill="#000"/>
<rect x="860" y="707" width="5.9" height="1" fill="#000"/>
<rect x="860" y="708" width="5.5" height="1" fill="#000"/>
<rect x="860" y="709" width="3.0" height="1" fill="#000"/>
<rect x="860" y="710" width="7.2" height="3" fill="#000"/>
<rect x="860" y="713" width="5.7" height="1" fill="#000"/>
<rect x="860" y="714" width="12.7" height="3" fill="#000"/>
<rect x="860" y="717" width="18.2" height="1" fill="#000"/>
<rect x="860" y="718" width="18.0" height="3" fill="#000"/>
<rect x="860" y="721" width="7.2" height="1" fill="#000"/>
<rect x="860" y="722" width="15.7" height="1" fill="#000"/>
<rect x="860" y="723" width="10.3" height="1" fill="#000"/>
<rect x="860" y="724" width="8.5" height="1" fill="#000"/>
<rect x="860" y="725" width="13.6" height="2" fill="#000"/>
<rect x="860" y="727" width="10.4" height="2" fill="#000"/>
<rect x="860" y="729" width="6.1" height="1" fill="#000"/>
<rect x="860" y="730" width="10.7" height="2" fill="#000"/>
<rect x="860" y="732" width="9.1" height="1" fill="#000"/>
<rect x="860" y="733" width="17.6" height="1" fill="#000"/>
<rect x="860" y="734" width="17.8" height="2" fill="#000"/>
<rect x="860" y="736" width="9.9" height="2" fill="#000"/>
<rect x="860" y="738" width="2.0" height="1" fill="#000"/>
<rect x="860" y="739" width="17.5" height="1" fill="#000"/>
<rect x="860" y="740" width="5.7" height="1" fill="#000"/>
<rect x="860" y="741" width="9.6" height="2" fill="#000"/>
<rect x="860" y="743" width="10.8" height="1" fill="#000"/>
<rect x="860" y="744" width="16.5" height="3" fill="#000"/>
<rect x="860" y="747" width="16.7" height="1" fill="#000"/>
<rect x="860" y="748" width="3.2" height="2" fill="#000"/>
<rect x="860" y="750" width="13.8" height="1" fill="#000"/>
<rect x="860" y="751" width="10.1" height="3" fill="#000"/>
<rect x="860" y="754" width="8.8" height="2" fill="#000"/>
<rect x="860" y="756" width="8.8" height="2" fill="#000"/>
<rect x="860" y="758" width="3.9" height="1" fill="#000"/>
<rect x="860" y="759" width="11.9" height="1" fill="#000"/>
<rect x="860" y="760" width="6.4" height="2" fill="#000"/>
<rect x="860" y="762" width="12.5" height="2" fill="#000"/>
<rect x="860" y="764" width="11.4" height="1" fill="#000"/>
<rect x="860" y="765" width="6.7" height="2" fill="#000"/>
<rect x="860" y="767" width="10.7" height="3" fill="#000"/>
<rect x="860" y="770" width="4.1" height="1" fill="#000"/>
<rect x="860" y="771" width="4.7" height="2" fill="#000"/>
<rect x="860" y="773" width="2.7" height="2" fill="#000"/>
<rect x="860" y="775" width="0.9" height="1" fill="#000"/>
<rect x="860" y="776" width="2.5" height="1" fill="#000"/>
<rect x="860" y="343" width="19.5" height="2" fill="#0a0a4a"/>
<rect x="860" y="319" width="19.1" height="2" fill="#0a0a4a"/>
<rect x="860" y="459" width="21.6" height="1" fill="#0a0a4a"/>
<rect x="860" y="737" width="20.0" height="2" fill="#0a0a4a"/>
<rect x="860" y="71" width="17.8" height="1" fill="#0a0a4a"/>
<rect x="860" y="759" width="13.7" height="1" fill="#0a0a4a"/>
<rect x="860" y="360" width="24.0" height="1" fill="#0a0a4a"/>
<rect x="860" y="657" width="19.1" height="1" fill="#0a0a4a"/>
<rect x="860" y="354" width="18.6" height="2" fill="#0a0a4a"/>
<rect x="860" y="436" width="24.2" height="2" fill="#0a0a4a"/>
<rect x="860" y="528" width="22.4" height="2" fill="#0a0a4a"/>
<rect x="860" y="515" width="21.9" height="2" fill="#0a0a4a"/>
<rect x="860" y="413" width="18.7" height="2" fill="#0a0a4a"/>
<rect x="860" y="649" width="23.4" height="1" fill="#0a0a4a"/>
<rect x="860" y="621" width="19.0" height="2" fill="#0a0a4a"/>
<rect x="860" y="514" width="19.1" height="1" fill="#0a0a4a"/>
<rect x="860" y="404" width="19.1" height="1" fill="#0a0a4a"/>
<rect x="860" y="80" width="19.2" height="1" fill="#0a0a4a"/>
<rect x="860" y="173" width="21.0" height="1" fill="#0a0a4a"/>
<rect x="860" y="395" width="21.8" height="1" fill="#0a0a4a"/>
<rect x="860" y="424" width="23.8" height="1" fill="#0a0a4a"/>
<rect x="860" y="719" width="24.5" height="1" fill="#0a0a4a"/>
<rect x="860" y="681" width="20.6" height="1" fill="#0a0a4a"/>
<rect x="860" y="95" width="20.5" height="2" fill="#0a0a4a"/>
<rect x="860" y="659" width="17.8" height="2" fill="#0a0a4a"/>
<rect x="860" y="549" width="24.5" height="1" fill="#0a0a4a"/>
<rect x="860" y="551" width="20.8" height="1" fill="#0a0a4a"/>
<rect x="860" y="618" width="14.3" height="1" fill="#0a0a4a"/>
<rect x="860" y="452" width="22.8" height="1" fill="#0a0a4a"/>
<rect x="860" y="33" width="18.3" height="1" fill="#0a0a4a"/>
<rect x="860" y="565" width="23.5" height="1" fill="#0a0a4a"/>
<rect x="860" y="479" width="14.9" height="2" fill="#0a0a4a"/>
<rect x="860" y="503" width="24.9" height="1" fill="#0a0a4a"/>
<rect x="860" y="236" width="16.1" height="1" fill="#0a0a4a"/>
<rect x="860" y="504" width="20.1" height="1" fill="#0a0a4a"/>
<rect x="860" y="599" width="15.2" height="1" fill="#0a0a4a"/>
<rect x="860" y="586" width="16.9" height="1" fill="#0a0a4a"/>
<rect x="860" y="270" width="19.0" height="2" fill="#0a0a4a"/>
<rect x="860" y="243" width="22.4" height="1" fill="#0a0a4a"/>
<rect x="860" y="459" width="17.8" height="2" fill="#0a0a4a"/>
<rect x="860" y="315" width="23.3" height="1" fill="#0a0a4a"/>
<rect x="860" y="720" width="19.3" height="1" fill="#0a0a4a"/>
<rect x="860" y="438" width="22.8" height="1" fill="#0a0a4a"/>
<rect x="860" y="345" width="23.1" height="1" fill="#0a0a4a"/>
<rect x="860" y="64" width="22.4" height="1" fill="#0a0a4a"/>
<rect x="860" y="454" width="19.5" height="1" fill="#0a0a4a"/>
<rect x="860" y="267" width="17.3" height="1" fill="#0a0a4a"/>
<rect x="860" y="17" width="15.2" height="2" fill="#0a0a4a"/>
<rect x="860" y="698" width="16.0" height="2" fill="#0a0a4a"/>
<rect x="860" y="429" width="14.9" height="2" fill="#0a0a4a"/>
<rect x="860" y="111" width="20.3" height="2" fill="#0a0a4a"/>
<rect x="860" y="281" width="17.4" height="2" fill="#0a0a4a"/>
<rect x="860" y="586" width="14.4" height="2" fill="#0a0a4a"/>
<rect x="860" y="41" width="20.2" height="1" fill="#0a0a4a"/>
<rect x="860" y="246" width="17.2" height="1" fill="#0a0a4a"/>
<rect x="860" y="18" width="14.5" height="1" fill="#0a0a4a"/>
<rect x="860" y="725" width="24.6" height="1" fill="#0a0a4a"/>
<rect x="860" y="247" width="19.5" height="1" fill="#0a0a4a"/>
<rect x="860" y="350" width="23.9" height="1" fill="#0a0a4a"/>
<rect x="860" y="534" width="24.5" height="1" fill="#0a0a4a"/>
<rect x="860" y="159" width="21.2" height="2" fill="#0a0a4a"/>
<rect x="860" y="231" width="18.0" height="1" fill="#0a0a4a"/>
<rect x="860" y="325" width="19.1" height="1" fill="#0a0a4a"/>
<rect x="860" y="614" width="22.1" height="2" fill="#0a0a4a"/>
<rect x="860" y="353" width="15.0" height="1" fill="#0a0a4a"/>
<rect x="860" y="287" width="19.0" height="2" fill="#0a0a4a"/>
<rect x="860" y="195" width="18" height="1" fill="#0a0a40"/>
<rect x="860" y="197" width="22" height="2" fill="#100a50"/>
<rect x="860" y="199" width="20" height="2" fill="#000"/>
<rect x="860" y="201" width="24" height="2" fill="#0c0c55"/>
<rect x="860" y="203" width="28" height="2" fill="#1a0f70"/>
<rect x="860" y="205" width="32" height="1" fill="#2a1280"/>
<rect x="860" y="206" width="34" height="1" fill="#3a1080"/>
<rect x="860" y="207" width="38" height="1" fill="#7a1860"/>
<rect x="860" y="208" width="40" height="1" fill="#a02060"/>
<rect x="860" y="209" width="38" height="1" fill="#b03070"/>
<rect x="860" y="210" width="36" height="1" fill="#c04080"/>
<rect x="860" y="211" width="32" height="1" fill="#902090"/>
<rect x="860" y="212" width="30" height="1" fill="#4a2080"/>
<rect x="860" y="213" width="30" height="1" fill="#6a5aa0"/>
<rect x="860" y="214" width="20" height="1" fill="#000"/>
<rect x="860" y="216" width="26" height="2" fill="#0a0a50"/>
<rect x="860" y="219" width="18" height="2" fill="#000"/>
<rect x="860" y="1" width="80" height="11" fill="#000"/>
<rect x="860" y="777" width="80" height="5" fill="#000"/>
<rect x="860" y="18" width="80" height="1" fill="#a8a8a8"/>
<rect x="860" y="96" width="80" height="1" fill="#a8a8a8"/>
<rect x="860" y="174" width="80" height="1" fill="#a8a8a8"/>
<rect x="860" y="252" width="80" height="1" fill="#a8a8a8"/>
<rect x="860" y="330" width="80" height="1" fill="#a8a8a8"/>
<rect x="860" y="408" width="80" height="1" fill="#a8a8a8"/>
<rect x="860" y="486" width="80" height="1" fill="#a8a8a8"/>
<rect x="860" y="564" width="80" height="1" fill="#a8a8a8"/>
<rect x="860" y="642" width="80" height="1" fill="#a8a8a8"/>
<rect x="860" y="720" width="80" height="1" fill="#a8a8a8"/>
<polyline points="860.5,3 860.6,4 860.7,5 860.8,6 860.9,7 861.0,8 861.0,9 861.1,10 861.2,11 861.3,12 861.4,13 861.5,14 862.1,15 862.7,16 863.2,17 863.8,18 864.4,19 865.0,20 865.9,21 866.8,22 867.6,23 868.5,24 869.4,25 870.2,26 871.1,27 872.0,28 872.1,29 872.2,30 872.5,31 872.5,32 871.5,33 871.5,34 872.1,35 873.1,36 873.6,37 874.1,38 874.3,39 873.9,40 872.9,41 873.0,42 872.6,43 873.1,44 873.6,45 874.5,46 874.6,47 874.4,48 873.7,49 873.0,50 872.7,51 873.2,52 873.6,53 873.8,54 874.1,55 874.5,56 874.9,57 873.8,58 873.4,59 872.7,60 873.1,61 873.3,62 874.5,63 875.0,64 874.9,65 875.0,66 874.4,67 873.6,68 873.5,69 872.9,70 873.4,71 874.5,72 874.9,73 875.2,74 875.0,75 874.7,76 873.6,77 873.2,78 873.3,79 874.2,80 874.5,81 875.3,82 875.5,83 875.0,84 874.8,85 874.2,86 873.6,87 873.7,88 874.0,89 874.6,90 875.0,91 875.5,92 875.6,93 874.6,94 874.1,95 873.7,96 873.7,97 874.6,98 875.1,99 875.1,100 875.7,101 875.3,102 874.8,103 874.0,104 874.1,105 873.9,106 874.6,107 874.8,108 875.6,109 875.8,110 875.8,111 874.8,112 874.8,113 874.2,114 874.0,115 874.4,116 875.5,117 875.4,118 876.1,119 875.7,120 875.2,121 875.1,122 874.1,123 874.2,124 874.5,125 875.4,126 875.7,127 875.9,128 876.1,129 875.8,130 874.6,131 874.6,132 875.0,133 874.8,134 875.4,135 876.2,136 876.0,137 876.2,138 875.9,139 875.4,140 874.4,141 874.8,142 875.3,143 875.9,144 876.2,145 876.7,146 876.1,147 875.9,148 874.9,149 874.5,150 875.3,151 875.3,152 876.0,153 876.6,154 876.8,155 876.1,156 876.2,157 875.8,158 874.9,159 875.0,160 875.5,161 876.4,162 876.8,163 877.0,164 876.8,165 875.9,166 875.6,167 875.3,168 875.5,169 876.0,170 876.9,171 876.7,172 877.2,173 876.9,174 876.0,175 875.6,176 875.2,177 875.6,178 876.2,179 876.5,180 877.2,181 877.1,182 877.0,183 876.9,184 876.2,185 875.7,186 875.9,187 876.4,188 877.8,189 878.5,190 878.0,191 878.2,192 877.7,193 877.2,194 877.4,195 877.8,196 878.1,197 879.4,198 879.7,199 879.7,200 879.6,201 880.2,202 880.8,203 881.4,204 882.0,205 884.6,206 887.2,207 889.8,208 892.4,209 895.0,210 897.6,211 896.5,212 895.5,213 894.4,214 893.3,215 892.3,216 891.2,217 890.1,218 889.1,219 888.0,220 887.2,221 886.5,222 885.7,223 884.9,224 884.2,225 883.4,226 882.6,227 881.9,228 881.1,229 880.3,230 879.6,231 878.8,232 878.0,233 877.3,234 877.5,235 876.9,236 876.5,237 875.9,238 874.8,239 874.3,240 874.5,241 875.2,242 875.1,243 875.5,244 875.5,245 874.5,246 873.9,247 873.5,248 873.0,249 872.8,250 873.4,251 873.5,252 874.1,253 874.2,254 873.6,255 873.3,256 872.9,257 872.7,258 872.9,259 873.3,260 874.2,261 874.1,262 874.2,263 873.8,264 873.2,265 873.1,266 872.6,267 873.1,268 873.3,269 873.8,270 874.4,271 874.0,272 873.9,273 873.2,274 872.8,275 872.5,276 872.9,277 873.5,278 873.5,279 874.4,280 874.3,281 873.8,282 873.1,283 873.1,284 872.3,285 872.6,286 873.2,287 874.3,288 874.3,289 874.1,290 873.7,291 873.2,292 873.1,293 872.2,294 872.6,295 873.5,296 873.6,297 874.4,298 874.6,299 873.9,300 873.5,301 872.8,302 872.9,303 873.2,304 873.5,305 874.2,306 874.5,307 874.6,308 873.8,309 873.4,310 872.7,311 872.9,312 873.1,313 873.3,314 874.0,315 874.8,316 874.5,317 873.7,318 873.3,319 872.4,320 872.4,321 873.1,322 873.2,323 874.1,324 874.6,325 874.7,326 873.8,327 872.9,328 872.7,329 872.7,330 873.1,331 873.7,332 873.7,333 874.3,334 874.5,335 873.7,336 873.5,337 873.1,338 872.5,339 873.0,340 873.1,341 874.2,342 874.7,343 874.5,344 873.7,345 873.6,346 872.3,347 872.7,348 872.5,349 873.4,350 873.9,351 874.1,352 874.6,353 874.1,354 873.2,355 872.5,356 872.6,357 872.7,358 873.5,359 874.2,360 874.7,361 874.1,362 873.6,363 873.0,364 873.1,365 872.9,366 872.8,367 873.4,368 874.3,369 874.5,370 874.4,371 873.7,372 873.3,373 872.3,374 872.4,375 873.2,376 873.8,377 874.1,378 874.5,379 874.2,380 873.7,381 873.2,382 872.9,383 872.9,384 872.7,385 873.5,386 874.0,387 874.6,388 874.6,389 874.2,390 873.3,391 872.8,392 872.3,393 872.6,394 873.2,395 874.2,396 874.5,397 873.9,398 874.1,399 873.3,400 872.8,401 872.4,402 872.8,403 873.6,404 874.0,405 874.4,406 874.4,407 873.8,408 873.0,409 873.1,410 872.4,411 873.0,412 873.5,413 873.8,414 874.3,415 874.4,416 874.0,417 873.0,418 872.4,419 872.7,420 872.6,421 873.6,422 873.8,423 874.6,424 874.4,425 873.9,426 873.0,427 872.9,428 872.6,429 872.8,430 873.8,431 873.9,432 874.8,433 874.5,434 873.3,435 873.2,436 872.6,437 872.3,438 873.0,439 873.7,440 873.8,441 874.1,442 874.4,443 873.5,444 873.4,445 872.6,446 872.8,447 872.9,448 873.2,449 874.3,450 874.2,451 874.3,452 873.8,453 873.1,454 872.4,455 872.4,456 873.3,457 874.0,458 874.0,459 874.5,460 874.6,461 873.4,462 873.1,463 872.9,464 872.8,465 873.1,466 873.9,467 874.1,468 874.2,469 874.0,470 873.5,471 873.0,472 872.3,473 872.9,474 873.2,475 873.8,476 874.3,477 874.6,478 874.1,479 873.4,480 872.8,481 872.3,482 873.0,483 873.2,484 873.8,485 874.3,486 874.3,487 874.2,488 873.3,489 873.2,490 872.6,491 872.3,492 873.4,493 873.7,494 873.8,495 874.2,496 874.0,497 873.6,498 872.6,499 872.6,500 872.8,501 873.2,502 873.6,503 874.4,504 874.1,505 873.8,506 873.2,507 872.7,508 872.9,509 872.5,510 873.4,511 873.9,512 874.5,513 874.8,514 874.3,515 873.7,516 873.2,517 872.8,518 872.6,519 873.3,520 873.4,521 874.5,522 874.0,523 874.5,524 873.7,525 873.3,526 872.7,527 872.6,528 873.1,529 873.7,530 873.9,531 874.7,532 873.8,533 873.3,534 872.8,535 872.8,536 872.6,537 873.0,538 873.8,539 874.1,540 874.1,541 874.3,542 873.5,543 873.1,544 872.2,545 873.1,546 872.9,547 873.8,548 874.0,549 874.2,550 874.3,551 873.5,552 873.3,553 872.3,554 873.0,555 873.5,556 873.7,557 874.6,558 874.2,559 874.2,560 873.4,561 872.9,562 872.7,563 873.0,564 873.1,565 873.5,566 874.1,567 874.6,568 873.9,569 873.4,570 873.0,571 872.5,572 873.0,573 873.1,574 873.8,575 874.6,576 874.0,577 874.0,578 873.6,579 873.0,580 872.6,581 872.7,582 873.6,583 874.2,584 874.1,585 874.3,586 873.7,587 873.1,588 872.8,589 872.5,590 872.9,591 873.0,592 873.8,593 874.6,594 874.1,595 873.8,596 873.3,597 872.9,598 873.0,599 872.5,600 873.2,601 874.0,602 874.6,603 874.7,604 874.3,605 873.2,606 872.7,607 872.2,608 872.4,609 873.2,610 873.8,611 874.4,612 874.7,613 873.7,614 873.8,615 873.0,616 872.3,617 872.9,618 873.0,619 873.6,620 874.5,621 874.1,622 874.1,623 873.3,624 873.0,625 872.5,626 872.9,627 873.0,628 874.2,629 874.6,630 874.2,631 874.1,632 873.1,633 872.9,634 872.4,635 873.2,636 873.0,637 873.6,638 874.6,639 874.5,640 874.1,641 873.0,642 872.8,643 872.8,644 872.5,645 873.6,646 874.0,647 874.0,648 874.4,649 873.9,650 873.6,651 872.9,652 872.9,653 873.0,654 873.3,655 873.7,656 874.7,657 874.2,658 874.0,659 873.6,660 872.6,661 872.2,662 873.1,663 873.5,664 873.7,665 874.2,666 874.4,667 874.0,668 873.6,669 872.8,670 872.4,671 873.0,672 873.3,673 873.8,674 874.1,675 874.1,676 873.6,677 873.0,678 872.8,679 872.3,680 872.6,681 873.5,682 873.7,683 874.6,684 873.9,685 873.7,686 873.0,687 872.8,688 872.6,689 873.0,690 873.4,691 874.3,692 874.0,693 874.4,694 873.5,695 873.1,696 873.1,697 872.4,698 872.5,699 873.8,700 873.6,701 874.5,702 874.0,703 874.0,704 873.5,705 872.5,706 872.9,707 873.0,708 873.1,709 873.8,710 874.3,711 874.5,712 874.2,713 873.0,714 873.0,715 872.7,716 872.5,717 873.5,718 873.9,719 874.4,720 874.5,721 873.5,722 872.9,723 872.4,724 872.6,725 873.1,726 873.3,727 874.2,728 874.7,729 874.3,730 873.5,731 872.8,732 872.4,733 872.8,734 873.2,735 873.1,736 874.2,737 874.7,738 874.1,739 874.2,740 873.4,741 872.5,742 872.4,743 873.2,744 873.3,745 873.7,746 874.0,747 874.4,748 873.9,749 872.9,750 873.0,751 872.5,752 872.7,753 873.3,754 874.2,755 874.6,756 874.6,757 873.4,758 873.2,759 873.2,760 873.1,761 873.0,762 872.9,763 872.8,764 872.6,765 872.5,766 871.9,767 871.4,768 870.8,769 870.2,770 869.6,771 869.1,772 868.5,773 866.9,774 865.2,775 863.6,776 862.0,777 861.5,778 861.0,779 860.5,780" fill="none" stroke="#c03434" stroke-width="1.6"/>
<rect x="897" y="210.5" width="9" height="1" fill="#c86060" opacity="0.8"/>
<polyline points="861.0,6 867.0,8 873.0,10 875.0,12 877.0,14 879.8,16 883.2,18 885.7,20 886.4,22 887.8,24 891.6,26 891.0,28 894.3,30 895.6,32 895.5,34 896.3,36 897.1,38 897.4,40 900.0,42 897.4,44 898.0,46 897.6,48 898.8,50 900.1,52 899.1,54 898.8,56 899.1,58 901.6,60 898.7,62 901.2,64 899.2,66 899.8,68 899.8,70 901.1,72 899.6,74 899.3,76 900.0,78 902.0,80 900.3,82 900.7,84 900.1,86 900.5,88 901.0,90 903.4,92 903.4,94 901.0,96 901.6,98 903.9,100 903.5,102 900.4,104 898.6,106 898.4,108 901.0,110 900.0,112 899.6,114 900.3,116 900.5,118 903.0,120 901.1,122 901.9,124 905.0,126 904.9,128 906.4,130 906.5,132 908.1,134 908.2,136 909.0,138 908.2,140 910.3,142 911.2,144 910.9,146 911.6,148 911.5,150 909.6,152 910.4,154 912.2,156 910.6,158 911.1,160 913.4,162 912.3,164 912.1,166 913.3,168 917.1,170 916.0,172 917.4,174 917.9,176 918.5,178 921.2,180 920.9,182 922.1,184 922.2,186 923.0,188 923.1,190 922.5,192 923.6,194 924.9,196 927.6,198 927.2,200 930.1,202 932.6,204 935.7,206 940.2,208" fill="none" stroke="#28e028" stroke-width="1.3"/>
<polyline points="940.0,223 940.1,225 938.8,227 933.1,229 931.6,231 929.5,233 930.5,235 928.1,237 923.0,239 920.3,241 916.6,243 915.0,245 914.8,247 908.9,249 906.4,251 905.8,253 901.6,255 899.4,257 900.9,259 895.5,261 898.3,263 894.8,265 892.2,267 890.5,269 890.0,271 890.0,273 888.8,275 887.5,277 888.3,279 883.7,281 883.8,283 888.0,285 887.7,287 888.2,289 885.2,291 885.0,293 887.4,295 888.5,297 884.1,299 887.5,301 884.3,303 887.4,305 887.8,307 884.7,309 888.9,311 884.6,313 884.8,315 885.2,317 888.2,319 888.2,321 889.0,323 889.1,325 888.6,327 885.4,329 884.6,331 885.4,333 885.4,335 885.0,337 884.7,339 888.9,341 884.5,343 884.5,345 885.6,347 884.5,349 884.1,351 884.4,353 884.1,355 884.9,357 888.2,359 885.9,361 885.7,363 889.2,365 885.3,367 885.8,369 885.0,371 887.6,373 884.7,375 885.3,377 888.8,379 885.1,381 888.5,383 888.9,385 888.0,387 888.7,389 888.3,391 888.4,393 888.4,395 887.9,397 885.0,399 885.0,401 884.4,403 887.7,405 885.7,407 885.5,409 884.7,411 884.4,413 888.4,415 887.9,417 887.6,419 885.1,421 884.4,423 885.8,425 885.5,427 888.9,429 888.4,431 888.2,433 885.9,435 884.7,437 888.1,439 888.0,441 887.7,443 889.0,445 888.3,447 885.8,449 885.2,451 888.6,453 884.6,455 885.8,457 887.9,459 888.5,461 884.3,463 885.4,465 884.9,467 888.6,469 888.2,471 884.9,473 884.5,475 888.3,477 887.8,479 886.0,481 888.0,483 885.2,485 888.8,487 888.3,489 884.4,491 887.9,493 884.8,495 889.4,497 887.9,499 889.5,501 889.3,503 889.4,505 888.5,507 886.2,509 888.5,511 886.0,513 885.7,515 885.9,517 885.3,519 889.2,521 889.3,523 885.6,525 889.4,527 888.5,529 889.6,531 884.5,533 887.8,535 884.7,537 889.4,539 887.9,541 888.1,543 889.4,545 888.0,547 885.8,549 889.2,551 885.5,553 889.4,555 886.2,557 885.0,559 884.9,561 889.3,563 888.7,565 888.4,567 889.0,569 885.2,571 884.5,573 885.6,575 886.1,577 886.2,579 885.5,581 884.7,583 884.6,585 886.3,587 888.8,589 889.5,591 889.3,593 888.3,595 885.0,597 888.1,599 889.0,601 888.8,603 884.6,605 885.4,607 886.4,609 888.6,611 888.0,613 889.1,615 885.1,617 885.0,619 889.6,621 884.9,623 884.9,625 888.9,627 888.6,629 888.3,631 888.0,633 888.5,635 888.2,637 885.4,639 888.6,641 889.0,643 888.1,645 888.9,647 888.1,649 888.1,651 888.8,653 886.3,655 889.5,657 885.8,659 886.0,661 886.3,663 888.8,665 886.2,667 885.8,669 888.5,671 885.8,673 885.7,675 885.0,677 885.7,679 886.0,681 888.3,683 884.7,685 886.0,687 886.1,689 885.2,691 889.9,693 889.5,695 886.5,697 884.8,699 886.1,701 889.7,703 885.7,705 888.5,707 889.8,709 888.9,711 886.5,713 888.7,715 886.1,717 889.4,719 889.9,721 885.1,723 885.0,725 885.2,727 886.6,729 885.1,731 885.5,733 886.0,735 886.0,737 889.8,739 889.0,741 888.3,743 889.1,745 884.9,747 888.7,749 889.6,751 885.4,753 885.6,755 888.8,757 889.1,759 888.3,761 886.9,763 883.3,765 881.4,767 880.2,769 879.4,771 876.3,773 873.1,775 870.0,777 868.4,779 866.8,781" fill="none" stroke="#28e028" stroke-width="1.3"/>
<path d="M933 782 Q936 777 940 776.5" fill="none" stroke="#30e030" stroke-width="1.2"/>
<circle cx="928.5" cy="97.5" r="3.4" fill="#000" stroke="#c03030" stroke-width="1.4"/>
</svg>
</body></html>
